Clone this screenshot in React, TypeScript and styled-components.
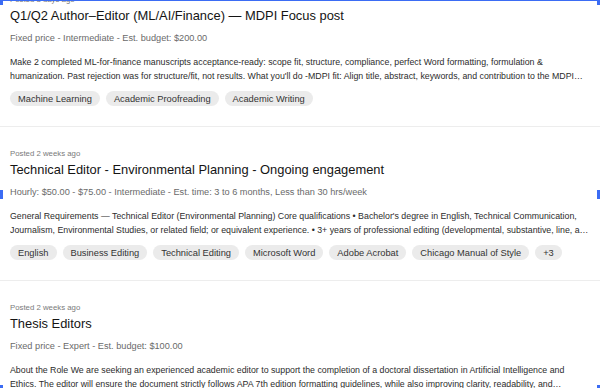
import React from "react";
import styled, { createGlobalStyle } from "styled-components";

const Global = createGlobalStyle`
  html, body { margin: 0; padding: 0; background: #fff; overflow: hidden; }
  body { width: 600px; height: 388px; font-family: "Liberation Sans", Arial, sans-serif; }
`;

const Viewport = styled.div`
  position: relative;
  width: 600px;
  height: 388px;
  overflow: hidden;
`;

const List = styled.div`
  display: flex;
  flex-direction: column;
  margin-top: -27px;
`;

const Card = styled.section`
  display: flex;
  flex-direction: column;
  padding: 20px 10px;
  border-bottom: 1px solid #ededed;
`;

const Posted = styled.div`
  font-size: 7.8px;
  line-height: 13px;
  color: #7a7a7a;
`;

const Title = styled.h2`
  margin: 0;
  font-size: 12.9px;
  line-height: 20px;
  font-weight: 400;
  color: #141414;
`;

const Meta = styled.div`
  margin-top: 5px;
  font-size: 9.2px;
  line-height: 14px;
  color: #6a6a6a;
`;

const Desc = styled.div`
  margin-top: 10px;
  width: 580px;
  display: flex;
  flex-direction: column;
  font-size: 8.8px;
  line-height: 14px;
  color: #2c2c2c;
`;

const DescLine = styled.span<{ $last?: boolean }>`
  white-space: nowrap;
  overflow: ${(p) => (p.$last ? "hidden" : "visible")};
  text-overflow: ellipsis;
`;

const Tags = styled.div`
  margin-top: 8px;
  display: flex;
  gap: 6px;
  flex-wrap: wrap;
`;

const Tag = styled.span`
  height: 15px;
  display: inline-flex;
  align-items: center;
  padding: 0 8px;
  border-radius: 8px;
  background: #ebebeb;
  color: #333;
  font-size: 9.3px;
`;

/* selection frame drawn over the page */
const Selection = styled.div`
  position: absolute;
  inset: 0;
  pointer-events: none;
  display: grid;
  grid-template-rows: 5px 185px 9px 1fr 3px;
`;

const HandleRow = styled.div`
  display: flex;
  justify-content: space-between;
  align-items: flex-start;
`;

const Line = styled.div`
  flex: 1;
  height: 1px;
  background: #3b6cf4;
`;

const Handle = styled.div`
  width: 3px;
  height: 100%;
  background: #3b6cf4;
`;

type Job = {
  posted: string;
  title: string;
  meta: string;
  first: string;
  rest: string;
  tags: string[];
};

const jobs: Job[] = [
  {
    posted: "Posted 3 days ago",
    title: "Q1/Q2 Author–Editor (ML/AI/Finance) — MDPI Focus post",
    meta: "Fixed price - Intermediate - Est. budget: $200.00",
    first:
      "Make 2 completed ML-for-finance manuscripts acceptance-ready: scope fit, structure, compliance, perfect Word formatting, formulation &",
    rest:
      "humanization. Past rejection was for structure/fit, not results. What you'll do -MDPI fit: Align title, abstract, keywords, and contribution to the MDPI…",
    tags: ["Machine Learning", "Academic Proofreading", "Academic Writing"],
  },
  {
    posted: "Posted 2 weeks ago",
    title: "Technical Editor - Environmental Planning - Ongoing engagement",
    meta:
      "Hourly: $50.00 - $75.00 - Intermediate - Est. time: 3 to 6 months, Less than 30 hrs/week",
    first:
      "General Requirements — Technical Editor (Environmental Planning) Core qualifications • Bachelor's degree in English, Technical Communication,",
    rest:
      "Journalism, Environmental Studies, or related field; or equivalent experience. • 3+ years of professional editing (developmental, substantive, line, an…",
    tags: [
      "English",
      "Business Editing",
      "Technical Editing",
      "Microsoft Word",
      "Adobe Acrobat",
      "Chicago Manual of Style",
      "+3",
    ],
  },
  {
    posted: "Posted 2 weeks ago",
    title: "Thesis Editors",
    meta: "Fixed price - Expert - Est. budget: $100.00",
    first:
      "About the Role We are seeking an experienced academic editor to support the completion of a doctoral dissertation in Artificial Intelligence and",
    rest:
      "Ethics. The editor will ensure the document strictly follows APA 7th edition formatting guidelines, while also improving clarity, readability, and…",
    tags: ["Academic Editing", "APA Formatting", "Proofreading"],
  },
];

export default function App() {
  return (
    <Viewport>
      <Global />
      <List>
        {jobs.map((j, i) => (
          <Card key={i}>
            <Posted>{j.posted}</Posted>
            <Title>{j.title}</Title>
            <Meta>{j.meta}</Meta>
            <Desc>
              <DescLine>{j.first}</DescLine>
              <DescLine $last>{j.rest}</DescLine>
            </Desc>
            <Tags>
              {j.tags.map((t) => (
                <Tag key={t}>{t}</Tag>
              ))}
            </Tags>
          </Card>
        ))}
      </List>
      <Selection>
        <HandleRow>
          <Handle />
          <Line />
          <Handle />
        </HandleRow>
        <div />
        <HandleRow>
          <Handle />
          <Handle />
        </HandleRow>
        <div />
        <HandleRow>
          <Handle />
          <Handle />
        </HandleRow>
      </Selection>
    </Viewport>
  );
}
